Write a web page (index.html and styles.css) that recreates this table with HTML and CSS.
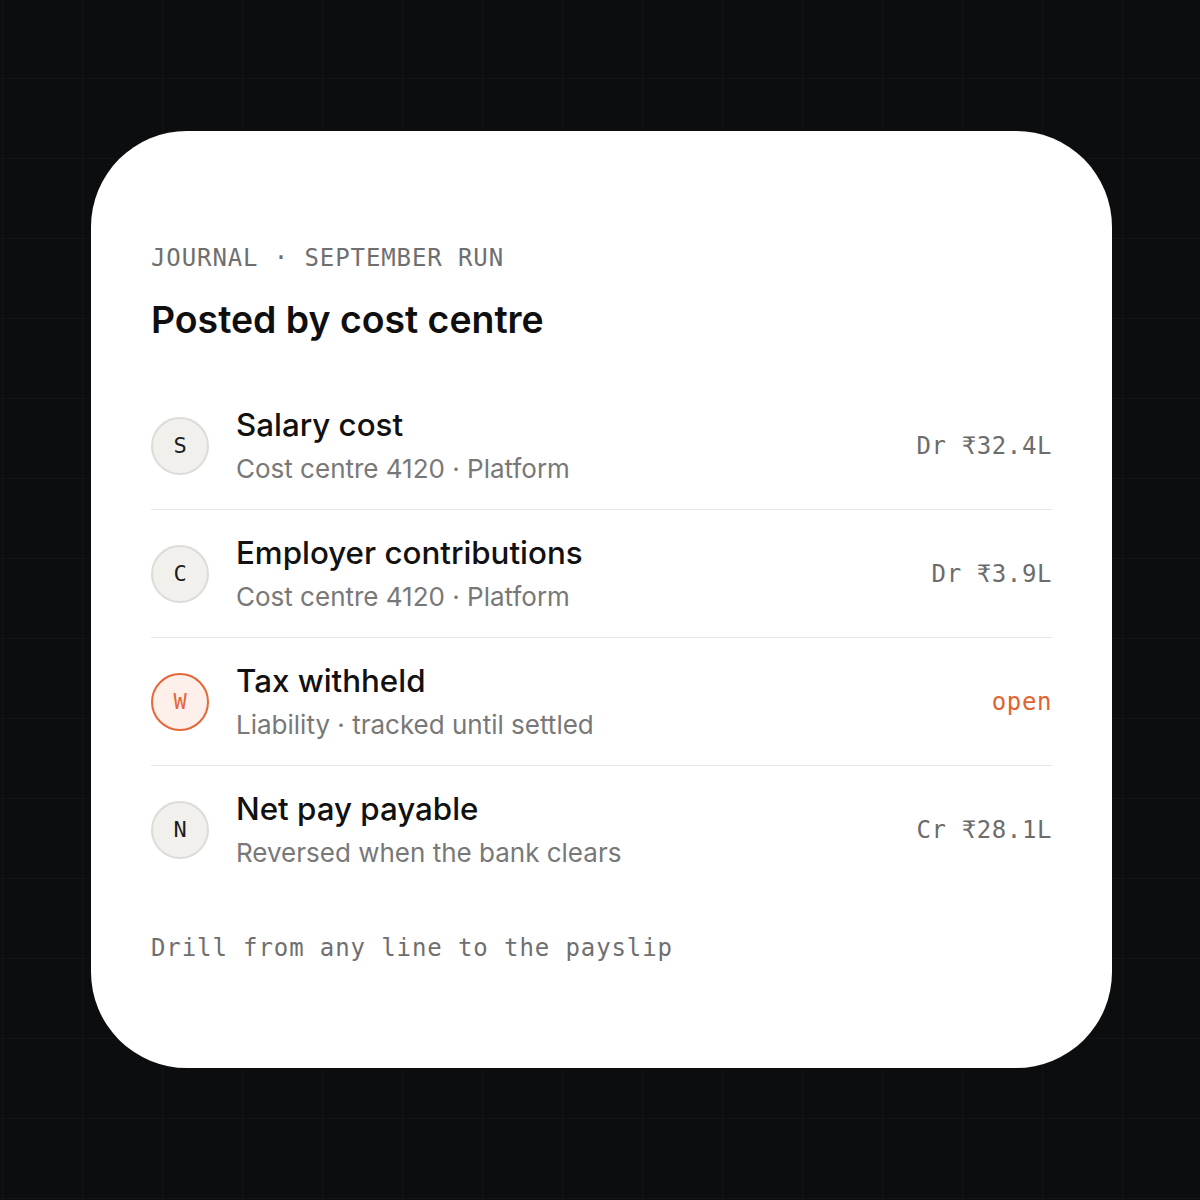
FILE: index.html
```html
<!DOCTYPE html>
<html lang="en">
<head>
<meta charset="utf-8">
<title>Journal · September run</title>
<link rel="stylesheet" href="styles.css">
</head>
<body>
<main class="stage">
  <section class="card">
    <div class="eyebrow">JOURNAL · SEPTEMBER RUN</div>
    <h1 class="title">Posted by cost centre</h1>
    <ul class="list">
      <li class="row">
        <span class="avatar">S</span>
        <div class="text">
          <div class="name">Salary cost</div>
          <div class="sub">Cost centre 4120 · Platform</div>
        </div>
        <span class="amount">Dr ₹32.4L</span>
      </li>
      <li class="row">
        <span class="avatar">C</span>
        <div class="text">
          <div class="name">Employer contributions</div>
          <div class="sub">Cost centre 4120 · Platform</div>
        </div>
        <span class="amount">Dr ₹3.9L</span>
      </li>
      <li class="row">
        <span class="avatar avatar-accent">W</span>
        <div class="text">
          <div class="name">Tax withheld</div>
          <div class="sub">Liability · tracked until settled</div>
        </div>
        <span class="amount amount-accent">open</span>
      </li>
      <li class="row">
        <span class="avatar">N</span>
        <div class="text">
          <div class="name">Net pay payable</div>
          <div class="sub">Reversed when the bank clears</div>
        </div>
        <span class="amount">Cr ₹28.1L</span>
      </li>
    </ul>
    <div class="footer">Drill from any line to the payslip</div>
  </section>
</main>
</body>
</html>
```

FILE: styles.css
```css
* { box-sizing: border-box; }

html, body {
  margin: 0;
  padding: 0;
}

body {
  background-color: #0c0d0f;
  background-image:
    linear-gradient(to right, rgba(255,255,255,0.025) 1px, transparent 1px),
    linear-gradient(to bottom, rgba(255,255,255,0.025) 1px, transparent 1px);
  background-size: 80px 80px;
  background-position: 2px -2px;
  font-family: Inter, "Noto Sans", sans-serif;
}

.stage {
  min-height: 1200px;
  padding: 0 0 2px 3px;
  display: flex;
  align-items: center;
  justify-content: center;
}

.card {
  width: 1021px;
  background: #ffffff;
  border-radius: 96px;
  padding: 112px 60px 105px;
}

.eyebrow {
  font-family: "DejaVu Sans Mono", "Liberation Mono", monospace;
  font-size: 24px;
  line-height: 30px;
  letter-spacing: 0.9px;
  color: #6f6f6f;
}

.title {
  margin: 25px 0 40px;
  font-size: 37.4px;
  line-height: 44px;
  font-weight: 600;
  color: #0f0f10;
}

.list {
  list-style: none;
  margin: 0;
  padding: 0;
}

.row {
  display: flex;
  align-items: center;
  padding: 23px 0 22px;
  border-bottom: 1px solid #e7e7e4;
}

.row:last-child {
  border-bottom: none;
}

.avatar {
  flex: none;
  width: 58px;
  height: 58px;
  border-radius: 50%;
  background: #f1f0ec;
  border: 2px solid #dddcd8;
  display: flex;
  align-items: center;
  justify-content: center;
  font-family: "DejaVu Sans Mono", "Liberation Mono", monospace;
  font-size: 22px;
  color: #1c1c1c;
  margin-right: 27px;
}

.avatar-accent {
  background: #fdf0ea;
  border-color: #e5673a;
  color: #e5673a;
}

.text {
  flex: 1;
  display: flex;
  flex-direction: column;
  gap: 6px;
}

.name {
  font-size: 31.3px;
  line-height: 40px;
  font-weight: 500;
  color: #111112;
}

.sub {
  font-size: 26px;
  line-height: 36px;
  color: #787878;
}

.amount {
  flex: none;
  font-family: "DejaVu Sans Mono", "Liberation Mono", monospace;
  font-size: 24px;
  letter-spacing: 0.6px;
  color: #6c6c6c;
}

.amount-accent {
  color: #e2632f;
}

.footer {
  margin-top: 40px;
  font-family: "DejaVu Sans Mono", "Liberation Mono", monospace;
  font-size: 24px;
  line-height: 30px;
  letter-spacing: 0.9px;
  color: #6f6f6f;
}
```
